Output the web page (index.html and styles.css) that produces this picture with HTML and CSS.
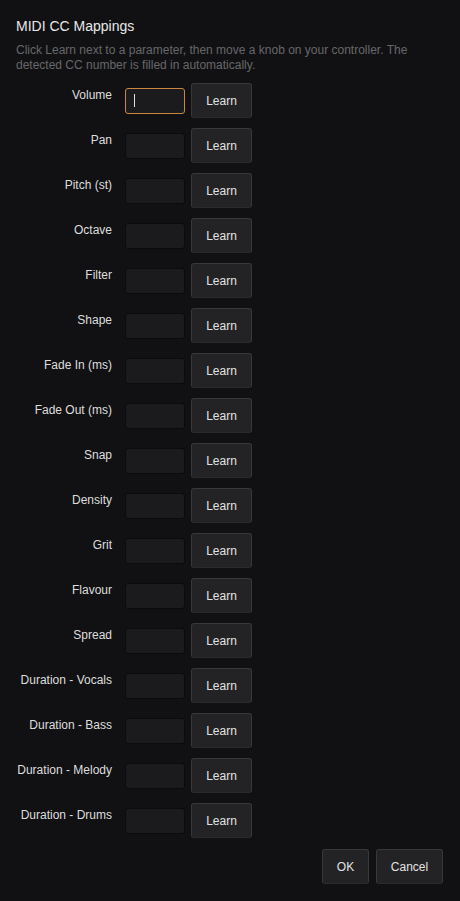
FILE: index.html
```html
<!DOCTYPE html>
<html lang="en">
<head>
<meta charset="utf-8">
<title>MIDI CC Mappings</title>
<link rel="stylesheet" href="styles.css">
</head>
<body>
<div class="dialog">
  <h1 class="title">MIDI CC Mappings</h1>
  <p class="desc">Click Learn next to a parameter, then move a knob on your controller. The detected CC number is filled in automatically.</p>
  <div class="grid">
    <label class="lbl">Volume</label>
    <div class="field"><input class="cc focused" type="text"><span class="caret"></span></div>
    <button class="btn learn">Learn</button>

    <label class="lbl">Pan</label>
    <div class="field"><input class="cc" type="text"></div>
    <button class="btn learn">Learn</button>

    <label class="lbl">Pitch (st)</label>
    <div class="field"><input class="cc" type="text"></div>
    <button class="btn learn">Learn</button>

    <label class="lbl">Octave</label>
    <div class="field"><input class="cc" type="text"></div>
    <button class="btn learn">Learn</button>

    <label class="lbl">Filter</label>
    <div class="field"><input class="cc" type="text"></div>
    <button class="btn learn">Learn</button>

    <label class="lbl">Shape</label>
    <div class="field"><input class="cc" type="text"></div>
    <button class="btn learn">Learn</button>

    <label class="lbl">Fade In (ms)</label>
    <div class="field"><input class="cc" type="text"></div>
    <button class="btn learn">Learn</button>

    <label class="lbl">Fade Out (ms)</label>
    <div class="field"><input class="cc" type="text"></div>
    <button class="btn learn">Learn</button>

    <label class="lbl">Snap</label>
    <div class="field"><input class="cc" type="text"></div>
    <button class="btn learn">Learn</button>

    <label class="lbl">Density</label>
    <div class="field"><input class="cc" type="text"></div>
    <button class="btn learn">Learn</button>

    <label class="lbl">Grit</label>
    <div class="field"><input class="cc" type="text"></div>
    <button class="btn learn">Learn</button>

    <label class="lbl">Flavour</label>
    <div class="field"><input class="cc" type="text"></div>
    <button class="btn learn">Learn</button>

    <label class="lbl">Spread</label>
    <div class="field"><input class="cc" type="text"></div>
    <button class="btn learn">Learn</button>

    <label class="lbl">Duration - Vocals</label>
    <div class="field"><input class="cc" type="text"></div>
    <button class="btn learn">Learn</button>

    <label class="lbl">Duration - Bass</label>
    <div class="field"><input class="cc" type="text"></div>
    <button class="btn learn">Learn</button>

    <label class="lbl">Duration - Melody</label>
    <div class="field"><input class="cc" type="text"></div>
    <button class="btn learn">Learn</button>

    <label class="lbl">Duration - Drums</label>
    <div class="field"><input class="cc" type="text"></div>
    <button class="btn learn">Learn</button>
  </div>
  <div class="actions">
    <button class="btn ok">OK</button>
    <button class="btn cancel">Cancel</button>
  </div>
</div>
</body>
</html>
```
FILE: styles.css
```css
html, body {
  margin: 0;
  padding: 0;
  background: #111113;
}
body {
  font-family: "Liberation Sans", Arial, sans-serif;
  color: #dcdcdc;
}
.dialog {
  padding: 16px 17px 16px 16px;
}
.title {
  margin: 0;
  font-size: 14px;
  font-weight: normal;
  line-height: 20px;
  color: #e8e8e8;
}
.desc {
  margin: 7px 0 0 0;
  font-size: 12px;
  line-height: 15px;
  color: #67676a;
}
.grid {
  margin-top: 10px;
  display: grid;
  grid-template-columns: 96px 73px 6px 61px;
  row-gap: 10px;
}
.lbl {
  grid-column: 1;
  font-size: 12px;
  line-height: 15px;
  text-align: right;
  color: #dedede;
  padding-top: 5px;
  white-space: nowrap;
}
.field {
  grid-column: 2;
  position: relative;
  margin-left: 13px;
  width: 60px;
  height: 35px;
  display: flex;
  align-items: center;
}
.cc {
  box-sizing: border-box;
  width: 60px;
  height: 26px;
  margin: 0;
  padding: 0 6px;
  background: #1b1b1e;
  border: 1px solid #0b0b0c;
  border-radius: 3px;
  color: #ddd;
  font-family: inherit;
  font-size: 12px;
  outline: none;
}
.cc.focused {
  border-color: #c9873f;
}
.caret {
  position: absolute;
  left: 9px;
  top: 11px;
  width: 1px;
  height: 13px;
  background: #e0e0e0;
}
.btn {
  box-sizing: border-box;
  height: 35px;
  margin: 0;
  padding: 0;
  background: #232326;
  border: 1px solid #38383b;
  border-bottom-color: #2a2a2d;
  border-radius: 3px;
  color: #e2e2e2;
  font-family: inherit;
  font-size: 12px;
}
.learn {
  grid-column: 4;
  width: 61px;
}
.actions {
  margin-top: 11px;
  display: flex;
  justify-content: flex-end;
  gap: 7px;
}
.ok {
  width: 47px;
}
.cancel {
  width: 67px;
}
```
